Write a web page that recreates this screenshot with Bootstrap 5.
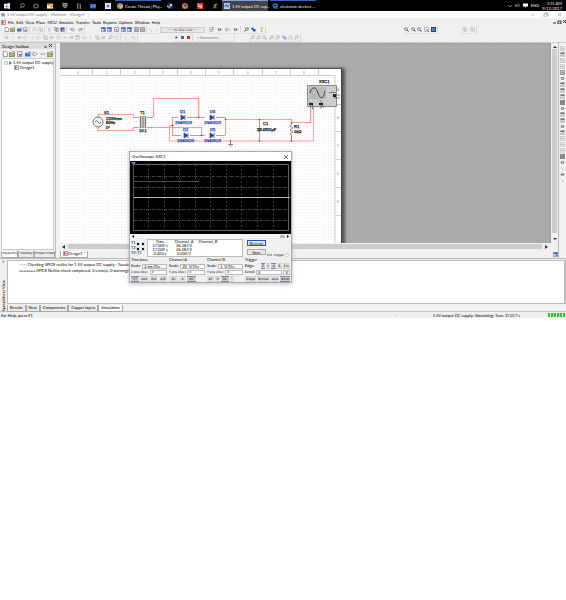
<!DOCTYPE html>
<html lang="en">
<head>
<meta charset="utf-8">
<meta name="viewport" content="width=device-width, initial-scale=1">
<title>1.5V output DC supply - Multisim</title>
<link href="https://cdn.jsdelivr.net/npm/bootstrap@5.3.0/dist/css/bootstrap.min.css" rel="stylesheet">
<style>
body{background:#fff;font:4px/5px Lato,"Liberation Sans",sans-serif;color:#000;overflow-x:hidden}
button,input,select{font:inherit;color:inherit;border:0;padding:0;margin:0;background:none;min-width:0;border-radius:0}
button{display:inline-flex;align-items:center;justify-content:center;white-space:nowrap}
a{color:inherit;text-decoration:none}
svg{display:block;flex:none}
.tight{font-family:"DejaVu Sans",Verdana,sans-serif;font-size:3px}
.taskbar{height:11px;background:#000;color:#eee}
.pins{width:115px}
.pins2{width:59px}
.task{width:46px;height:11px;border-top:1px solid #3767c4;justify-content:flex-start;gap:2px;padding-left:2px;margin-right:2px}
.task.current{background:#444;border-color:#7aa2ee}
.tray{gap:3px;padding-right:4px}
.titlebar{height:7px;color:#777;padding-left:1px}
.appname{display:flex;align-items:center;gap:2px}
.menubar{height:8px;background:#f0f0f0;padding-left:1px}
.menubar nav{gap:2px;padding-left:2px}
.tools{height:8px;background:#f0f0f0}
.tools .grp{display:flex;align-items:center;height:8px;border-right:1px solid #d8d8d8;border-bottom:1px solid #e0e0e0}
.dim{opacity:.45}
.combo{width:44px;height:6px;border:1px solid #ccc;background:#e8e8e8;color:#444;text-align:center;appearance:none;line-height:4px}
.work{height:216px;background:#f0f0f0;border-top:1px solid #ccc}
.toolbox{width:56px;border-right:1px solid #bbb}
.cap{height:6px;background:#dcdcdc;padding:0 2px}
.tbrow{height:9px;padding:0 1px}
.tree{background:#fff;border:1px solid #ccc;margin:0 1px;padding-top:1px}
.node{display:flex;align-items:center;gap:1px;padding-left:2px;white-space:nowrap}
.node.child{padding-left:12px}
.tabs{height:8px;align-items:center;gap:1px}
.tabs button{height:7px;padding:0 2px;border:1px solid #aaa;border-top:0;background:#ececec}
.tabs button.on{background:#fff}
.aside-tabs{padding-left:1px;gap:0}
.aside-tabs button{padding:0 1px}
.log .tabs{gap:0}
.sheetview{background:#ababab;padding-top:24px;overflow:hidden;border:1px dashed #999;border-width:1px 1px 0 0}
.sheetpage{width:282px;border-top:1px solid #555;border-right:1px solid #444;box-shadow:2px 1px 3px 1px #555;background:#fff}
.vbar{width:7px;background:#f0f0f0;padding:2px 1px}
.thumb{background:#cdcdcf}
.hbar{height:7px;padding:1px 2px;gap:3px}
.side{width:8px;border-left:1px solid #bbb;background:#f3f3f3;padding-top:2px}
.side button{height:6px}
.log{height:53px;background:#f0f0f0;border-top:1px solid #bbb}
.logside{width:7px}
.vert{writing-mode:vertical-rl;transform:rotate(180deg)}
.logtext{background:#fff;border:1px solid #bbb;border-right-width:2px;margin-top:1px;height:44px;padding:1px 11px;white-space:pre}
.logtext p{margin:0;height:6px}
.status{height:7px;background:#f0f0f0;border-top:1px solid #c8c8c8;padding:0 1px}
.simstate{margin:0 28px 0 36px}
.leds{gap:1px}
.led{width:2px;height:4px;background:#1fcf1f}
.scope{position:absolute;left:129px;top:151px;width:163px;background:#f0f0f0;border:1px solid #aaa;box-shadow:0 1px 4px #8888}
.scope header{height:9px;background:#fff;padding:0 3px 0 2px}
.trace{background:#000}
.scrub{height:4px;padding:0 2px;background:#f6f6f6}
.measure{padding:1px 2px 1px 1px}
.cursors{width:5px;white-space:nowrap;padding-top:1px}
.knobs{margin-top:3px}
.readout{background:#fff;border:1px solid #bbb;width:96px;height:18px;line-height:4px;margin-left:1px}
.readout table{width:72px;text-align:center;table-layout:fixed}
.readout td,.readout th{padding:0;font-weight:400}
.acts{gap:3px;padding:1px 0 0 4px}
.push{height:6px;width:19px;border:1px solid #aaa;background:#e6e6e6}
.push.focus{border-color:#2450d8;background:#dfe6fb}
.ext{gap:1px;white-space:nowrap;margin-left:auto;line-height:4px}
.sects{display:grid;grid-template-columns:36px 36px 36px 1fr;gap:2px;padding:0 1px}
.sects fieldset{border-top:1px solid #ddd;min-width:0}
.sects legend{font-size:4px;line-height:4px;margin:0;height:5px;float:none}
.fld{display:flex;align-items:center;gap:1px;height:6px;line-height:4px;white-space:nowrap}
.fld input{flex:1;width:1px;height:5px;border:1px solid #bbb;background:#fff;padding-left:1px;line-height:3px}
.unit{border:1px solid #bbb;background:#fff;height:5px;width:7px;line-height:3px;text-align:center}
.opts{display:flex;gap:1px;height:6px;margin-top:1px}
.opts button{background:#e0e0e0;border:solid #d0d0d0;border-width:1px 0;height:6px;flex:1 1 auto}
.opts.short{padding-right:9px}
.opts.mini{margin:0;width:29px}
.opts button.on{background:#ccd;border-color:#888}
</style>
<script src="https://cdn.jsdelivr.net/npm/bootstrap@5.3.0/dist/js/bootstrap.bundle.min.js"></script>
</head>
<body>
<svg width="0" height="0" class="position-absolute" aria-hidden="true">
<symbol id="doc" viewBox="0 0 10 10"><path d="M2 1h5l2 2v6H2z" fill="#fff" stroke="#555"/></symbol>
<symbol id="open" viewBox="0 0 10 10"><path d="M0 9V3h4l1 1h4v5z" fill="#c9b54a" stroke="#555"/><path d="M5 1h4v3" fill="none" stroke="#285"/></symbol>
<symbol id="openb" viewBox="0 0 10 10"><path d="M0 9V3h4l1 1h4v5z" fill="#3972d8"/><path d="M5 2h4v2" stroke="#235" fill="none"/></symbol>
<symbol id="pdf" viewBox="0 0 10 10"><path d="M1 1h7v8H1z" fill="#fff" stroke="#557"/><path d="M3 5h4v3H3z" fill="#c55"/></symbol>
<symbol id="prn" viewBox="0 0 10 10"><path d="M1 4h8v4H1zM3 4V1h4v3" fill="#eee" stroke="#888"/></symbol>
<symbol id="cut" viewBox="0 0 10 10"><path d="M2 1l5 8M7 1L3 9" stroke="#999" fill="none"/></symbol>
<symbol id="copy" viewBox="0 0 10 10"><path d="M1 1h5v6H1zM4 3h5v6H4z" fill="#ddd" stroke="#777"/></symbol>
<symbol id="paste" viewBox="0 0 10 10"><path d="M1 1h8v8H1z" fill="#4b557c"/><path d="M4 4h5v5H4z" fill="#8ca0dd"/></symbol>
<symbol id="undo" viewBox="0 0 10 10"><path d="M2 2v4h4M2 5c3-4 7-2 6 2l-2 2" fill="none" stroke="#555"/></symbol>
<symbol id="redo" viewBox="0 0 10 10"><path d="M8 2v4H4M8 5C5 1 1 3 2 7l2 2" fill="none" stroke="#555"/></symbol>
<symbol id="win" viewBox="0 0 10 10"><path d="M1 1h8v8H1z" fill="#dfe8ff" stroke="#456"/><path d="M1 1h8v3H1zM5 5h3v3H5z" fill="#4267c0"/></symbol>
<symbol id="winr" viewBox="0 0 10 10"><path d="M1 1h8v8H1z" fill="#eef" stroke="#457"/><path d="M3 4l4 4" stroke="#c33" stroke-width="2"/></symbol>
<symbol id="calc" viewBox="0 0 10 10"><path d="M1 1h8v8H1z" fill="#ddd" stroke="#555"/><path d="M3 3v5M5 3v5M7 3v5" stroke="#777"/></symbol>
<symbol id="wire" viewBox="0 0 10 10"><path d="M2 2l3 3v2l3 2" fill="none" stroke="#888"/></symbol>
<symbol id="chk" viewBox="0 0 10 10"><path d="M1 1h7v8H1z" fill="#fff" stroke="#999"/><path d="M2 4l3 3 4-6" fill="none" stroke="#c33" stroke-width="1.5"/></symbol>
<symbol id="part" viewBox="0 0 10 10"><path d="M1 5h2v-2h4v4H3V5M7 5h2" fill="none" stroke="#666" stroke-width="1.4"/></symbol>
<symbol id="gate" viewBox="0 0 10 10"><path d="M2 2h3l3 3-3 3H2zM8 5h2M0 5h2" fill="none" stroke="#777"/></symbol>
<symbol id="dio" viewBox="0 0 10 10"><path d="M0 5h10M3 2v6l4-3zM7 2v6" fill="#999" stroke="#777"/></symbol>
<symbol id="dots" viewBox="0 0 10 10"><path d="M1 5h2M4 5h2M7 5h2" stroke="#777" stroke-width="2"/></symbol>
<symbol id="mag" viewBox="0 0 10 10"><circle cx="4" cy="4" r="3" fill="#ddd" stroke="#444"/><path d="M6 6l3 3" stroke="#24a" stroke-width="2"/></symbol>
<symbol id="fit" viewBox="0 0 10 10"><path d="M1 1h8v8H1z" fill="none" stroke="#555" stroke-dasharray="2 1"/><path d="M5 5l4 4" stroke="#24a" stroke-width="2"/></symbol>
<symbol id="full" viewBox="0 0 10 10"><path d="M0 0h10v10H0z" fill="#345"/><path d="M2 2h6v6H2z" fill="#5a80c8"/></symbol>
<symbol id="blue" viewBox="0 0 10 10"><path d="M1 1h4v3h4v5H4V6H1z" fill="#2456b8"/></symbol>
<symbol id="hlp" viewBox="0 0 10 10"><path d="M3 3c0-3 5-2 4 1L5 6v1M5 8v2" fill="none" stroke="#b8a800" stroke-width="2"/></symbol>
<symbol id="play" viewBox="0 0 10 10"><path d="M3 2l5 3-5 3z" fill="#455"/></symbol>
<symbol id="pause" viewBox="0 0 10 10"><path d="M2 2h6v6H2z" fill="#2f6cc4"/></symbol>
<symbol id="stop" viewBox="0 0 10 10"><path d="M2 2h6v6H2z" fill="#d62a1c"/></symbol>
<symbol id="probe" viewBox="0 0 10 10"><circle cx="6" cy="4" r="3" fill="#ccc" stroke="#555"/><path d="M4 6L1 9" stroke="#555" stroke-width="2"/></symbol>
<symbol id="meter" viewBox="0 0 10 10"><path d="M1 1h8v8H1z" fill="#ddd" stroke="#aaa"/><path d="M1 1h8v3H1z" fill="#777"/><path d="M3 7h4" stroke="#888"/></symbol>
<symbol id="meter2" viewBox="0 0 10 10"><path d="M1 1h8v8H1z" fill="#eee" stroke="#aaa"/><path d="M2 6l2-3 2 4 2-3" stroke="#999" fill="none"/></symbol>
<symbol id="solid" viewBox="0 0 10 10"><path d="M0 0h10v10H0z" fill="#888"/></symbol>
<symbol id="start" viewBox="0 0 10 10"><path d="M0 1.5l4.500-.7v4H0zM5.200.7L10 0v4.800H5.200zM0 5.400h4.500v4L0 8.700zM5.200 5.400H10V10l-4.800-.7z" fill="#fff"/></symbol>
<symbol id="srch" viewBox="0 0 10 10"><circle cx="6" cy="4" r="3" fill="none" stroke="#ccc"/><path d="M4 6L1 9" stroke="#ccc"/></symbol>
<symbol id="view" viewBox="0 0 10 10"><path d="M2 2h6v6H2zM0 3v4M10 3v4" fill="none" stroke="#bbb"/></symbol>
<symbol id="fold" viewBox="0 0 10 10"><path d="M0 1h10v8H0z" fill="#e9c274"/><path d="M0 5h10v4H0z" fill="#f6efe2"/><path d="M1 2h3M6 6h3" stroke="#b45" stroke-width="2"/></symbol>
<symbol id="epic" viewBox="0 0 10 10"><path d="M1 0h8v6l-4 3-4-3z" fill="#999"/><path d="M3 3h4M3 6h4" stroke="#222"/></symbol>
<symbol id="bars" viewBox="0 0 10 10"><path d="M3 0v10M7 1v9" stroke="#aaa" stroke-width="1.5"/></symbol>
<symbol id="disc" viewBox="0 0 10 10"><path d="M0 2h10v7H0z" fill="#2e62c0"/><path d="M2 2v5M5 1v6M8 2v5" stroke="#9bbcf2"/></symbol>
<symbol id="snow" viewBox="0 0 10 10"><path d="M0 0h10v10H0z" fill="#e8eefb"/><path d="M2 5h6M5 2v6M3 3l4 4M7 3L3 7" stroke="#2a55c0"/></symbol>
<symbol id="chrome" viewBox="0 0 10 10"><circle cx="5" cy="5" r="5" fill="#e8453c"/><path d="M5 5L.7 2.500A5 5 0 0 0 5 10z" fill="#35a853"/><path d="M5 5v5a5 5 0 0 0 4.500-7H5z" fill="#fbbc05"/><circle cx="5" cy="5" r="2.200" fill="#4285f4" stroke="#fff" stroke-width=".7"/></symbol>
<symbol id="steam" viewBox="0 0 10 10"><circle cx="5" cy="5" r="5" fill="#1b3b66"/><circle cx="6.500" cy="3.500" r="2" fill="#dde"/><path d="M0 5l4 2.500 2-3" stroke="#dde" stroke-width="1.500" fill="none"/></symbol>
<symbol id="ffox" viewBox="0 0 10 10"><circle cx="5" cy="5" r="5" fill="#e8651b"/><circle cx="5.500" cy="4" r="2.500" fill="#3454a8"/><path d="M1 3c1 5 5 5 8 2" stroke="#fb3" fill="none"/></symbol>
<symbol id="rsq" viewBox="0 0 10 10"><path d="M0 0h10v10H0z" fill="#df3824"/><path d="M3 2v4h4V3M7 6v3" stroke="#fff" fill="none" stroke-width="1.500"/></symbol>
<symbol id="lol" viewBox="0 0 10 10"><path d="M1 1h8v8H1z" fill="#221"/><path d="M3 8h2V3l3-1" stroke="#cb9" fill="none" stroke-width="1.500"/></symbol>
<symbol id="msim" viewBox="0 0 10 10"><path d="M0 0h10v10H0z" fill="#b8c7e6"/><path d="M1 6l3-4 2 5 3-4" stroke="#2a4a9a" fill="none" stroke-width="1.500"/></symbol>
<symbol id="edge" viewBox="0 0 10 10"><path d="M1 5c1-5 8-5 8 .5H3c0 3 3 3.500 6 2.200" fill="none" stroke="#2f7fe0" stroke-width="2"/></symbol>
<symbol id="sch" viewBox="0 0 10 10"><path d="M1 1h8v8H1z" fill="#fff" stroke="#444"/><path d="M3 2v6M3 4h3v3" fill="none" stroke="#b33" stroke-width="1.500"/></symbol>
</svg>

<header>
<div class="taskbar d-flex align-items-center">
  <div class="pins d-flex" data-icons="start srch view fold epic bars disc snow" data-size="6"></div>
  <button class="task"><svg width="6" height="6"><use href="#chrome"/></svg>Create Thread | Phy...</button>
  <div class="pins2 d-flex" data-icons="steam ffox rsq lol" data-size="6"></div>
  <button class="task current"><svg width="6" height="6"><use href="#msim"/></svg>1.5V output DC sup...</button>
  <button class="task"><svg width="6" height="6"><use href="#edge"/></svg>electronic devices ...</button>
  <div class="tray ms-auto d-flex align-items-center">
    <svg width="4" height="4" viewBox="0 0 10 10"><path d="M1 3l4 4 4-4" fill="none" stroke="#ccc" stroke-width="2"/></svg>
    <svg width="5" height="5" viewBox="0 0 10 10"><path d="M1 3v4M4 2v6M7 2q3 3 0 6" fill="none" stroke="#bbb" stroke-width="1.500"/></svg>
    <svg width="5" height="5" viewBox="0 0 10 10"><path d="M0 1h10v6H6v3L4 7H0z" fill="#fff"/></svg>
    <span>ENG</span>
    <span class="text-end">3:15 AM<br>9/12/2017</span>
  </div>
</div>
<div class="titlebar d-flex align-items-center justify-content-between">
  <span class="appname"><svg width="4" height="4"><use href="#msim"/></svg>1.5V output DC supply - Multisim - [Design1 *]</span>
  <svg width="36" height="5" viewBox="0 0 36 5"><path d="M1 3h3M14 2h3v3h-3zM15 1h3v3M28 1l3 3M31 1l-3 3" fill="none" stroke="#999" stroke-width=".7"/></svg>
</div>
<div class="menubar d-flex align-items-center">
  <svg width="5" height="5"><use href="#sch"/></svg>
  <nav class="d-flex"><a href="#">File</a><a href="#">Edit</a><a href="#">View</a><a href="#">Place</a><a href="#">MCU</a><a href="#">Simulate</a><a href="#">Transfer</a><a href="#">Tools</a><a href="#">Reports</a><a href="#">Options</a><a href="#">Window</a><a href="#">Help</a></nav>
  <svg class="ms-auto" width="13" height="4" viewBox="0 0 13 4"><path d="M0 3h3M5 1h3v3H5zM10 0l3 3M13 0l-3 3" fill="none" stroke="#333"/></svg>
</div>
<div class="tools d-flex align-items-center" id="bar1"></div>
<div class="tools d-flex align-items-center" id="bar2"></div>
</header>

<main>
<div class="work d-flex">
  <aside class="toolbox d-flex flex-column">
    <div class="cap d-flex justify-content-between align-items-center"><span>Design Toolbox</span><svg width="9" height="4" viewBox="0 0 9 4"><path d="M0 3h3M5 0l3 3M8 0L5 3" stroke="#333" fill="none"/></svg></div>
    <div class="tbrow d-flex" data-icons="doc open pdf openb gate dots open" data-size="6"></div>
    <div class="tree flex-fill">
      <div class="node"><svg width="4" height="4" viewBox="0 0 4 4"><path d="M.5.5h3v3h-3zM1 2h2" fill="none" stroke="#999" stroke-width=".5"/></svg><svg width="3" height="4" viewBox="0 0 3 4"><path d="M0 0l3 2-3 2z" fill="#1db61d"/></svg>1.5V output DC supply</div>
      <div class="node child"><svg width="5" height="5"><use href="#sch"/></svg>Design1</div>
    </div>
    <div class="tabs aside-tabs tight d-flex"><button class="on">Hierarchy</button><button>Visibility</button><button>Project View</button></div>
  </aside>
  <section class="d-flex flex-column flex-fill ps-1 overflow-hidden">
    <div class="d-flex flex-fill overflow-hidden">
      <div class="sheetview flex-fill">
        <div class="sheetpage">
        <svg width="281" height="176" viewBox="60 68 281 176" font-family="Liberation Sans,Arial,sans-serif" font-size="4" fill="#111">
          <defs><pattern id="grid" width="3" height="3" patternUnits="userSpaceOnUse"><path d="M1 1h1v1H1z" fill="#ededed"/></pattern></defs>
          <path d="M60 75h275v169H60z" fill="url(#grid)"/>
          <path d="M60 74.500h275V244M92.500 68v6M120.500 68v6M149.500 68v6M177.500 68v6M205.500 68v6M233.500 68v6M262.500 68v6M290.500 68v6M318.500 68v6M335 103.500h6M335 130.500h6M335 158.500h6M335 186.500h6M335 214.500h6" fill="none" stroke="#ccc"/>
          <g font-size="3" fill="#777"><text x="77" y="73">0</text><text x="106" y="73">1</text><text x="134" y="73">2</text><text x="162" y="73">3</text><text x="190" y="73">4</text><text x="218" y="73">5</text><text x="247" y="73">6</text><text x="275" y="73">7</text><text x="303" y="73">8</text><text x="337" y="90">A</text><text x="337" y="118">B</text><text x="337" y="146">C</text><text x="337" y="174">D</text><text x="337" y="202">E</text></g>
          <g fill="none" stroke="#fc9d98" stroke-width="1.200">
            <path d="M98 116v-2.500h35v2.500M98 126v3.500h35v-2.500M153.500 116V97.500h45V116M153 126.500h48.500V134M172.500 116v18.500M225.500 116v18.500M172.500 124.500h-3v15.500M225 118.500h66.500v3h19V105M169 140h144.500V105"/>
            <path d="M133 116.500h6M147 116.500h6M133 126.500h6M147 126.500h6M172 116.500h6M187 116.500h18M216 116.500h9M172 134.500h9M190 134.500h15M216 134.500h9M259.500 119v21" stroke="#a6a6a6"/>
          </g>
          <g fill="#eee" stroke="#777"><circle cx="98" cy="121" r="5"/><path d="M95 121q1.500-3 3 0t3 0" fill="none"/></g>
          <path d="M139.500 115h7v12h-7z" fill="#ccc"/><path d="M140.500 115v12M145.500 115v12M143 115v12" stroke="#777"/>
          <g fill="#2343b0" stroke="#2343b0" stroke-width=".7"><path id="d" d="M181 114v5l4-2.500zM185 114v5"/><use href="#d" x="29"/><use href="#d" x="3" y="18"/><use href="#d" x="29" y="18"/></g>
          <g fill="#b22"><circle cx="172.500" cy="124.500" r=".8"/><circle cx="198.500" cy="116.500" r=".8"/><circle cx="201.500" cy="134.500" r=".8"/><circle cx="225.500" cy="118.500" r=".8"/><circle cx="259.500" cy="118.500" r=".8"/><circle cx="259.500" cy="140" r=".8"/><circle cx="291.500" cy="121.500" r=".8"/><circle cx="291.500" cy="140" r=".8"/><circle cx="230.500" cy="140" r=".8"/></g>
          <path d="M230.500 140v3M228 143.500h5M229.500 145h2M257 127.500h5M257 129.500h5M291.500 122v2l-1.500 1 3 2-3 2 3 2-3 2 1.500 1v6" fill="none" stroke="#666" stroke-width=".8"/>
          <g stroke="#111" stroke-width=".25"><text x="104" y="113">V1</text><text x="106" y="118.500">220Vrms</text><text x="106" y="123">60Hz</text><text x="106" y="127.500">0°</text><text x="140" y="113">T1</text><text x="139" y="131">10:1</text><text x="263" y="124">C1</text><text x="257" y="129.500">10 4955µF</text><text x="294" y="127">R1</text><text x="294" y="132">1kΩ</text><text x="319" y="82">XSC1</text></g>
          <g fill="#2343b0" stroke="#2343b0" stroke-width=".25"><text x="180" y="112">D1</text><text x="175" y="123">1N4001G</text><text x="210" y="112">D6</text><text x="204" y="123">1N4001G</text><text x="183" y="130">D2</text><text x="177" y="141">1N4001G</text><text x="210" y="130">D5</text><text x="204" y="141">1N4001G</text></g>
          <path d="M307.500 84.500h29v21h-29z" fill="#ccc" stroke="#888"/><path d="M309 86h17v12h-17z" fill="#b9b9b9"/><path d="M310 92c2-7 6-7 8 0s6 6 7-2" fill="none" stroke="#444"/><path d="M309 102h4v2h-4zM319 102h4v2h-4zM333 93h3v3h-3z" fill="#111"/><path d="M310.500 101v6M312.500 104v4M321 99v9M323 104v3M329 91.500h7M334 97h6M334 94h6" stroke="#555" stroke-width=".7"/>
        </svg>
        </div>
      </div>
      <div class="vbar d-flex flex-column align-items-center justify-content-between"><svg width="4" height="4" viewBox="0 0 4 4"><path d="M0 3l2-2 2 2z" fill="#333"/></svg><div class="thumb w-100 flex-fill mb-1"></div><svg width="4" height="4" viewBox="0 0 4 4"><path d="M0 1l2 2 2-2z" fill="#333"/></svg></div>
    </div>
    <div class="hbar d-flex align-items-center"><svg width="3" height="4" viewBox="0 0 3 4"><path d="M3 0L0 2l3 2z" fill="#333"/></svg><div class="thumb flex-fill h-100"></div><svg class="me-2" width="3" height="4" viewBox="0 0 3 4"><path d="M0 0l3 2-3 2z" fill="#333"/></svg></div>
    <div class="tabs d-flex justify-content-between"><button class="on"><svg width="5" height="5"><use href="#sch"/></svg>Design1 *</button><svg width="5" height="5"><use href="#win"/></svg></div>
  </section>
  <aside class="side d-flex flex-column" id="instruments"></aside>
</div>

<section class="log d-flex">
  <div class="logside d-flex flex-column align-items-center"><span>×</span><span class="vert mt-auto text-nowrap">Spreadsheet View</span></div>
  <div class="flex-fill">
    <div class="logtext"><p>----- Checking SPICE netlist for 1.5V output DC supply - Tuesday, September 12, 2017, 3:15:22 AM -----</p><p>======= SPICE Netlist check completed, 0 error(s), 0 warning(s) =======</p></div>
    <div class="tabs d-flex"><button>Results</button><button>Nets</button><button>Components</button><button>Copper layers</button><button class="on">Simulation</button></div>
  </div>
</section>
<footer class="status d-flex align-items-center justify-content-between"><span>For Help, press F1</span>
  <span class="d-flex align-items-center"><span>-</span><span class="simstate">1.5V output DC supply: Simulating: Tran: 37.017 s</span><span class="leds d-flex" id="leds"></span></span>
</footer>
</main>

<section class="scope" role="dialog" aria-label="Oscilloscope">
  <header class="d-flex align-items-center justify-content-between"><span>Oscilloscope-XSC1</span><button aria-label="Close"><svg width="4" height="4" viewBox="0 0 4 4"><path d="M0 0l4 4M4 0L0 4" stroke="#333" stroke-width=".7"/></svg></button></header>
  <svg class="trace" width="161" height="73" viewBox="0 0 161 73">
    <path d="M3.500 3.500h155v66H3.500z" fill="none" stroke="#666"/>
    <path d="M4 15.500h154M4 26.500h154M4 48.500h154M4 59.500h154" stroke="#444" stroke-dasharray="3 1 1 1"/>
    <path d="M18.500 4v66M34.500 4v66M49.500 4v66M65.500 4v66M80.500 4v66M96.500 4v66M111.500 4v66M127.500 4v66M143.500 4v66" stroke="#3a3a3a" stroke-dasharray="2 2"/>
    <path d="M3 20.500h66" stroke="#4a4a4a"/><path d="M3 36.500h157" stroke="#bbb"/>
    <path d="M3.500 3v67" stroke="#555"/><path d="M1 1h5L3.500 4z" fill="#6f86e8"/>
  </svg>
  <div class="scrub d-flex justify-content-between align-items-center"><svg width="2" height="3" viewBox="0 0 2 3"><path d="M2 0L0 1.500 2 3z"/></svg><svg width="9" height="3" viewBox="0 0 9 3"><path d="M0 0h5v3H0z" fill="#bbb"/><path d="M7 0l2 1.500L7 3z"/></svg></div>
  <div class="measure d-flex">
    <div class="cursors">T1<br>T2<br>T2-T1</div>
    <svg class="knobs" width="10" height="9" viewBox="0 0 10 9"><path d="M0 0h4v4H0zM5 0h4v4H5zM0 5h4v4H0zM5 5h4v4H5z" fill="#ddd"/><path d="M1 1h2v2H1zM6 1h2v2H6zM1 6h2v2H1zM6 6h2v2H6z" fill="#111"/></svg>
    <div class="readout"><table><thead><tr><th>Time</th><th>Channel_A</th><th>Channel_B</th></tr></thead><tbody><tr><td>37.009 s</td><td>26.383 V</td><td></td></tr><tr><td>37.009 s</td><td>26.383 V</td><td></td></tr><tr><td>0.000 s</td><td>0.000 V</td><td></td></tr></tbody></table></div>
    <div class="acts d-flex flex-column"><button class="push focus">Reverse</button><button class="push">Save</button></div>
    <div class="ext tight d-flex align-self-end align-items-center"><span>Ext. trigger</span><svg width="4" height="4" viewBox="0 0 4 4"><circle cx="2" cy="2" r="1.500" fill="#fff" stroke="#ccc"/></svg></div>
  </div>
  <div class="sects">
    <fieldset><legend>Timebase</legend><div class="fld"><label for="tb">Scale:</label><input id="tb" value="2 ms/Div"></div><div class="fld tight"><label for="xp">X pos.(Div):</label><input id="xp" value="0"></div><div class="opts tight"><button class="on">Y/T</button><button>Add</button><button>B/A</button><button>A/B</button></div></fieldset>
    <fieldset><legend>Channel A</legend><div class="fld"><label for="sa">Scale:</label><input id="sa" value="20  V/Div"></div><div class="fld tight"><label for="ya">Y pos.(Div):</label><input id="ya" value="0"></div><div class="opts short tight"><button>AC</button><button>0</button><button class="on">DC</button></div></fieldset>
    <fieldset><legend>Channel B</legend><div class="fld"><label for="sb">Scale:</label><input id="sb" value="5  V/Div"></div><div class="fld tight"><label for="yb">Y pos.(Div):</label><input id="yb" value="0"></div><div class="opts short tight"><button>AC</button><button>0</button><button class="on">DC</button><button>-</button></div></fieldset>
    <fieldset><legend>Trigger</legend><div class="fld justify-content-between"><span>Edge:</span><span class="opts mini tight"><button class="on">F</button><button>Ł</button><button class="on">A</button><button>B</button><button>Ext</button></span></div><div class="fld"><label for="lv">Level:</label><input id="lv" value="0"><span class="unit">V</span></div><div class="opts tight"><button>Single</button><button>Normal</button><button>Auto</button><button class="on">None</button></div></fieldset>
  </div>
</section>

<script>
const icon=(n,s)=>`<svg width="${s}" height="${s}"><use href="#${n}"/></svg>`;
const buttons=(list,s)=>list.split(' ').map(n=>`<button class="flex-fill" aria-label="${n}">${icon(n,s)}</button>`).join('');
document.querySelectorAll('[data-icons]').forEach(e=>e.innerHTML=buttons(e.dataset.icons,e.dataset.size));
// Each group: start gap, width, icon names, optional dim flag
const group=([gap,w,list,dim])=>`<div style="margin-left:${gap}px;width:${w}px" class="grp"><span class="d-flex w-100 ${dim?'dim':''}">${buttons(list,5)}</span></div>`;
document.getElementById('bar1').innerHTML=
 [[3,27,'doc open openb pdf'],[1,14,'prn copy',1],[1,21,'cut copy paste'],[1,17,'undo redo'],[15,47,'win win winr win win calc calc'],[0,14,'wire wire',1]].map(group).join('')
 +'<select class="combo" aria-label="In use list"><option>--- In-Use List ---</option></select>'
 +[[2,34,'chk part gate part'],[2,23,'probe blue hlp'],[137,35,'mag mag mag fit full'],[22,17,'copy copy',1]].map(group).join('');
document.getElementById('bar2').innerHTML=
 [[3,118,'part wire dio gate cut gate copy part prn dots part meter gate cut copy dio probe meter2',1],[0,17,'wire undo',1],[35,20,'play pause stop']].map(group).join('')
 +'<div class="grp text-secondary" style="width:42px"><span class="ps-1">⌁ Interactive</span></div>'
 +group([14,52,'probe probe mag probe probe blue prn probe',1]);
document.getElementById('instruments').innerHTML='meter2 meter meter2 meter2 calc part meter meter meter solid part meter meter part meter meter2 meter2 meter2 solid part wire dio wire'.split(' ').map(n=>`<button aria-label="${n}">${icon(n,5)}</button>`).join('');
document.getElementById('leds').innerHTML='<i class="led"></i>'.repeat(6);
</script>
</body>
</html>
